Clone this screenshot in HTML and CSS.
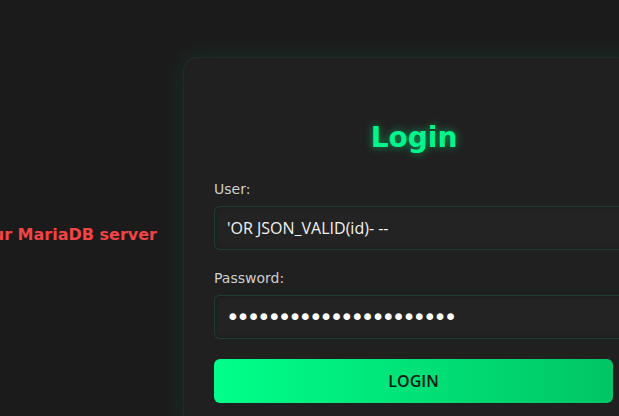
FILE: index.html
```html
<!DOCTYPE html>
<html lang="en">
<head>
<meta charset="utf-8">
<title>Login</title>
<link rel="stylesheet" href="styles.css">
</head>
<body>
<div class="page">
  <div class="side">
    <p class="error">Error: check your MariaDB server</p>
  </div>
  <div class="card">
    <h2 class="title">Login</h2>
    <form class="form">
      <label class="label" for="user">User:</label>
      <input class="field" id="user" type="text" value="'OR JSON_VALID(id)- --">
      <label class="label" for="pass">Password:</label>
      <input class="field field-pass" id="pass" type="password" value="abcdefghijklmnopqrstuv">
      <button class="btn" type="button">LOGIN</button>
    </form>
  </div>
</div>
</body>
</html>
```
FILE: styles.css
```css
html, body {
  margin: 0;
  padding: 0;
  background: #1b1b1b;
  overflow: hidden;
  height: 100%;
}
body {
  font-family: "DejaVu Sans", Verdana, sans-serif;
  color: #ddd;
}
.page {
  display: flex;
  align-items: flex-start;
  padding-top: 57px;
}
.side {
  width: 157px;
  flex-shrink: 0;
  display: flex;
  justify-content: flex-end;
  padding-top: 168px;
}
.error {
  margin: 0;
  white-space: nowrap;
  font-weight: bold;
  font-size: 16px;
  color: #f44444;
}
.card {
  margin-left: 26px;
  flex-shrink: 0;
  width: 400px;
  padding: 30px;
  background: #202020;
  border: 1px solid rgba(0, 255, 136, 0.06);
  border-radius: 14px;
  box-shadow: 0 0 28px rgba(0, 255, 136, 0.09);
}
.title {
  margin: 33px 0 27px;
  text-align: center;
  font-size: 28px;
  font-weight: bold;
  color: #00f58c;
  text-shadow: 0 0 8px rgba(0, 255, 136, 0.55);
}
.form {
  display: flex;
  flex-direction: column;
}
.label {
  font-size: 14px;
  color: #cfcfcf;
  margin-bottom: 9px;
}
.field {
  width: 400px;
  height: 42px;
  padding: 0 12px;
  margin-bottom: 20px;
  background: #232323;
  border: 1px solid rgba(0, 255, 136, 0.13);
  border-radius: 6px;
  color: #f2f2f2;
  font-family: "Open Sans", sans-serif;
  font-size: 16px;
  box-shadow: inset 0 0 4px rgba(0,0,0,0.3);
  outline: none;
}
.field-pass {
  font-family: "DejaVu Sans", sans-serif;
  font-size: 23px;
  letter-spacing: -3.2px;
  color: #ffffff;
  padding-left: 11px;
}
.btn {
  width: 399px;
  height: 44px;
  border: none;
  border-radius: 6px;
  background: linear-gradient(90deg, #00ff8a, #00c566);
  color: #0e1a12;
  font-family: "Open Sans", sans-serif;
  font-weight: 600;
  font-size: 16px;
}
```
